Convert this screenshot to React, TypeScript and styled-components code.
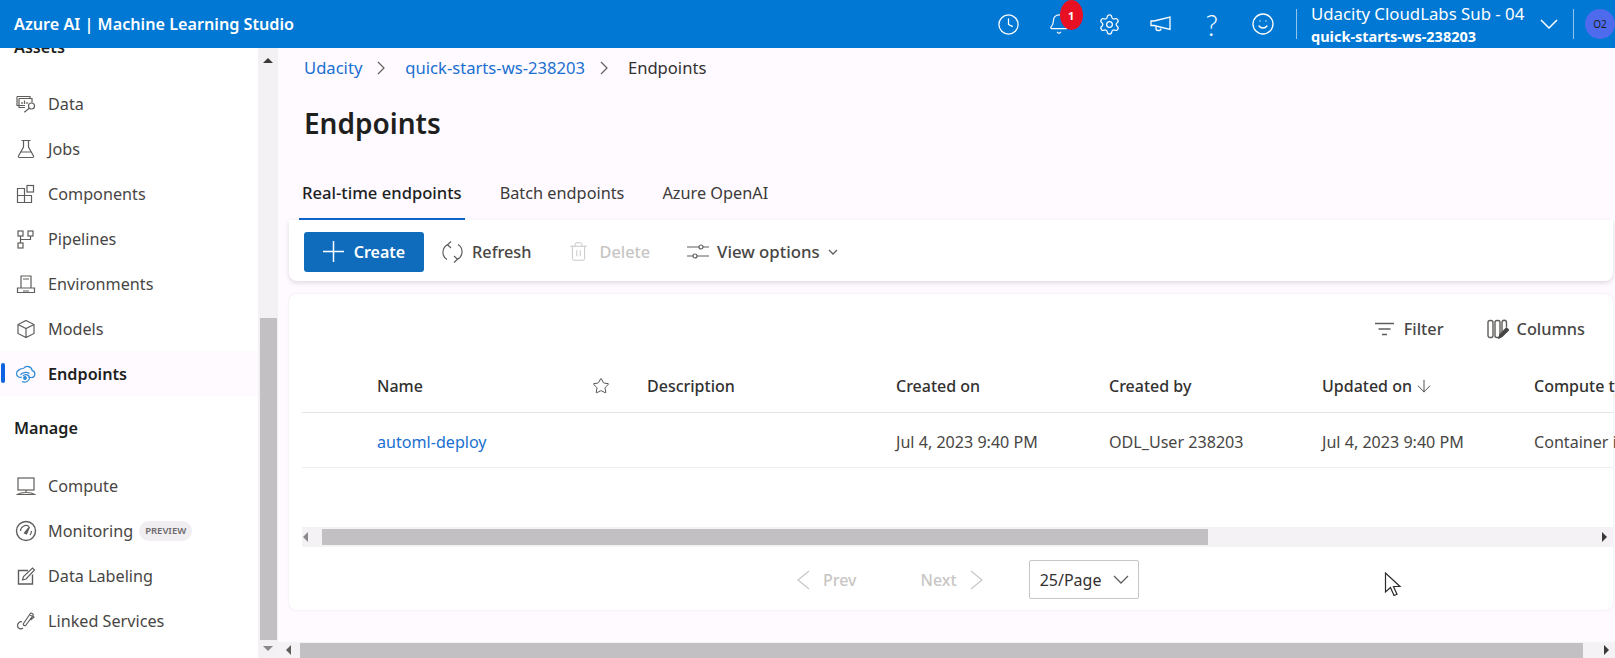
import React from "react";
import styled, { createGlobalStyle } from "styled-components";
import { ArrowDown, Bell, Clock, Settings, Smile, Star, Trash2 } from "lucide-react";

const GlobalStyle = createGlobalStyle`
  html, body {
    margin: 0;
    padding: 0;
    height: 100%;
    overflow: hidden;
    background: #fefaff;
    font-family: "Noto Sans", "Liberation Sans", sans-serif;
    color: #323130;
  }
  * { box-sizing: border-box; }
`;

const Page = styled.div`
  position: relative;
  width: 1615px;
  height: 658px;
  overflow: hidden;
  display: flex;
  flex-direction: column;
`;

/* top bar */
const TopBar = styled.header`
  flex: 0 0 48px;
  display: flex;
  align-items: center;
  justify-content: space-between;
  background: #0078d4;
  color: #fff;
  padding-left: 14px;
`;

const Brand = styled.div`
  font-size: 16.2px;
  font-weight: 600;
`;

const TopRight = styled.div`
  display: flex;
  align-items: center;
  height: 100%;
`;

const TopIcon = styled.div`
  position: relative;
  width: 50.9px;
  display: flex;
  justify-content: center;
  align-items: center;
  font-family: Lato, "Noto Sans", sans-serif;
  font-weight: 300;
  font-size: 29px;
  line-height: 1;
`;

const Badge = styled.span`
  position: absolute;
  top: -13px;
  left: 26px;
  width: 23px;
  height: 30px;
  border-radius: 50%;
  background: #e81123;
  color: #fff;
  font-family: "Noto Sans", sans-serif;
  font-size: 11px;
  font-weight: 700;
  display: flex;
  align-items: center;
  justify-content: center;
`;

const TopDivider = styled.div<{ $right?: number }>`
  width: 1px;
  height: 30px;
  background: #8fc4ec;
  margin: 0 ${(p) => p.$right ?? 14}px 0 8px;
`;

const Workspace = styled.div`
  width: 227px;
  display: flex;
  flex-direction: column;
  gap: 4px;
`;

const WorkspaceName = styled.div`
  font-size: 16.8px;
  line-height: 19px;
  white-space: nowrap;
`;

const WorkspaceId = styled.div`
  font-size: 14.5px;
  font-weight: 700;
  line-height: 18px;
  white-space: nowrap;
`;

const WorkspaceChevron = styled.svg`
  margin-right: 7px;
  margin-left: 2px;
`;

const Avatar = styled.div`
  width: 30px;
  height: 30px;
  border-radius: 50%;
  background: #4f6bed;
  color: #201f1e;
  font-size: 10px;
  display: flex;
  align-items: center;
  justify-content: center;
  margin-left: 11px;
`;

/* body */
const Body = styled.div`
  flex: 1;
  min-height: 0;
  display: flex;
`;

const Sidebar = styled.nav`
  flex: 0 0 258px;
  background: #fff;
  overflow: hidden;
`;

const SectionLabel = styled.div<{ $top: number; $bottom: number }>`
  height: 20px;
  line-height: 20px;
  margin: ${(p) => p.$top}px 0 ${(p) => p.$bottom}px 14px;
  font-size: 16.2px;
  font-weight: 600;
  color: #201f1e;
`;

const NavRow = styled.div<{ $active?: boolean }>`
  position: relative;
  height: 45px;
  display: flex;
  align-items: center;
  gap: 11px;
  padding-left: 15px;
  font-size: 16.2px;
  color: ${(p) => (p.$active ? "#201f1e" : "#484644")};
  font-weight: ${(p) => (p.$active ? 600 : 400)};
  background: ${(p) => (p.$active ? "#fefaff" : "transparent")};

  svg {
    flex: 0 0 22px;
  }

  ${(p) =>
    p.$active
      ? `&::before {
    content: "";
    position: absolute;
    left: 1px;
    top: 12px;
    width: 4px;
    height: 20px;
    border-radius: 2px;
    background: #0f62e0;
  }`
      : ""}
`;

const Preview = styled.span`
  margin-left: -5px;
  padding: 0 6px;
  height: 20px;
  line-height: 20px;
  border-radius: 10px;
  background: #f0eef1;
  color: #6b696b;
  font-size: 9.5px;
  font-weight: 600;
`;

const VScroll = styled.div`
  flex: 0 0 20px;
  background: #f3f1f4;
  display: flex;
  flex-direction: column;
  align-items: center;
`;

const VThumb = styled.div`
  width: 17px;
  height: 322px;
  margin-top: 255px;
  background: #c2c0c3;
`;

const Arrow = styled.span<{ $dir: "up" | "down" | "left" | "right"; $color?: string }>`
  width: 0;
  height: 0;
  flex: none;
  border-style: solid;
  border-color: transparent;
  ${(p) => {
    const c = p.$color ?? "#3b3a39";
    switch (p.$dir) {
      case "up":
        return `border-width: 0 5px 5px 5px; border-bottom-color: ${c};`;
      case "down":
        return `border-width: 5px 5px 0 5px; border-top-color: ${c};`;
      case "left":
        return `border-width: 5px 5px 5px 0; border-right-color: ${c};`;
      default:
        return `border-width: 5px 0 5px 5px; border-left-color: ${c};`;
    }
  }}
`;

const UpArrow = styled(Arrow)`
  margin-top: 10px;
`;

const DownArrow = styled(Arrow)`
  margin-top: 6px;
`;

/* main column */
const Main = styled.main`
  flex: 1;
  min-width: 0;
  display: flex;
  flex-direction: column;
  background: #fefaff;
`;

const Content = styled.div`
  flex: 1;
  min-height: 0;
  padding: 0 2px 0 11px;
`;

const Crumbs = styled.div`
  height: 41px;
  display: flex;
  align-items: center;
  padding: 0 0 2px 15px;
  font-size: 16.6px;
  color: #323130;
`;

const CrumbLink = styled.span`
  color: #1a6fd0;
`;

const CrumbSep = styled.svg`
  margin: 0 20px 0 15px;
`;

const Title = styled.h1`
  margin: 14px 0 0 15px;
  height: 40px;
  line-height: 40px;
  font-size: 28px;
  font-weight: 600;
  color: #201f1e;
`;

const Tabs = styled.div`
  margin: 32px 0 0 10px;
  height: 45px;
  display: flex;
`;

const Tab = styled.div<{ $active?: boolean }>`
  padding: 0 3px;
  margin-right: 32px;
  height: 45px;
  line-height: 36px;
  font-size: ${(p) => (p.$active ? 16.6 : 16.3)}px;
  color: ${(p) => (p.$active ? "#201f1e" : "#3b3a39")};
  font-weight: ${(p) => (p.$active ? 500 : 400)};
  border-bottom: 2px solid ${(p) => (p.$active ? "#0f62c9" : "transparent")};
`;

const Toolbar = styled.div`
  height: 61px;
  background: #fff;
  border-radius: 0 0 8px 8px;
  box-shadow: 0 2px 5px rgba(0, 0, 0, 0.13);
  display: flex;
  align-items: center;
  padding: 2px 0 0 15px;
`;

const CreateButton = styled.div`
  width: 120px;
  height: 40px;
  border-radius: 3px;
  background: #0f6cbd;
  color: #fff;
  font-size: 16px;
  font-weight: 600;
  display: flex;
  align-items: center;
  justify-content: center;
  gap: 10px;
  margin-right: 18px;
`;

const ToolButton = styled.div<{ $disabled?: boolean; $gap?: number; $right?: number; $size?: number }>`
  display: flex;
  align-items: center;
  gap: ${(p) => p.$gap ?? 10}px;
  margin-right: ${(p) => p.$right ?? 0}px;
  font-size: ${(p) => p.$size ?? 16.3}px;
  font-weight: 500;
  color: ${(p) => (p.$disabled ? "#c8c6c4" : "#484644")};
`;

const TableCard = styled.section`
  margin-top: 13px;
  height: 316px;
  background: #fff;
  border-radius: 8px;
  box-shadow: 0 0 3px rgba(0, 0, 0, 0.08);
  display: flex;
  flex-direction: column;
  padding-left: 13px;
`;

const FilterBar = styled.div`
  height: 68px;
  display: flex;
  justify-content: flex-end;
  align-items: center;
  padding: 2px 28px 0 0;
  gap: 43px;
`;

const TableArea = styled.div`
  flex: 0 0 165px;
`;

const Columns = "75px 215px 55px 249px 213px 213px 212px 300px";

const HeadRow = styled.div`
  display: grid;
  grid-template-columns: ${Columns};
  height: 51px;
  padding-bottom: 2px;
  align-items: center;
  border-bottom: 1px solid #e6e4e6;
  font-size: 16px;
  font-weight: 500;
  color: #323130;
  white-space: nowrap;
`;

const DataRow = styled(HeadRow)`
  height: 55px;
  padding: 3px 0 0;
  font-size: 16.1px;
  font-weight: 400;
  color: #484644;
  border-bottom-color: #efedef;
`;

const NameLink = styled.span`
  color: #1a6fd0;
`;

const SortCell = styled.span`
  display: inline-flex;
  align-items: center;
  gap: 2px;
`;

const HScroll = styled.div<{ $pad: number; $left: number; $width: number; $height: number; $thumb: number }>`
  flex: 0 0 ${(p) => p.$height}px;
  display: flex;
  align-items: center;
  background: #f5f2f6;
  padding: 0 6px 0 ${(p) => p.$pad}px;

  & > i {
    display: block;
    height: ${(p) => p.$thumb}px;
    width: ${(p) => p.$width}px;
    margin-left: ${(p) => p.$left}px;
    background: #c2c0c3;
  }

  & > span:last-child {
    margin-left: auto;
  }
`;

const Pager = styled.div`
  flex: 1;
  display: flex;
  align-items: center;
  padding: 2px 0 0 494px;
  font-size: 16px;
  font-weight: 500;
  color: #c8c6c4;
`;

const PagerLink = styled.div<{ $right: number }>`
  display: flex;
  align-items: center;
  gap: 13px;
  margin-right: ${(p) => p.$right}px;
`;

const PageSelect = styled.div`
  width: 110px;
  height: 39px;
  border: 1px solid #c8c6c4;
  border-radius: 2px;
  display: flex;
  align-items: center;
  justify-content: space-between;
  padding: 0 9px 0 10px;
  color: #323130;
  font-weight: 400;
  font-size: 16px;
`;

const Cursor = styled.svg`
  position: absolute;
  left: 1384px;
  top: 572px;
`;

/* drawn icons that the packages don't have */
const Draw = ({ children, color = "#605e5c" }: { children: React.ReactNode; color?: string }) => (
  <svg width="22" height="22" viewBox="0 0 22 22" fill="none" stroke={color} strokeWidth="1.2">
    {children}
  </svg>
);

const DataIcon = () => (
  <Draw>
    <path d="M2 3.5h13v2M2 3.5v9h8M4 5.5h13v4M4 5.5v9h6" />
    <path d="M7 11V9M9.5 11V7.5M12 11V9" />
    <circle cx="16.5" cy="13" r="3" />
    <path d="M14.3 15.2l-5 4" />
  </Draw>
);

const JobsIcon = () => (
  <Draw>
    <path d="M6.5 2.5h9M8.5 2.5v6.5L3.5 18a1 1 0 0 0 .9 1.5h13.2a1 1 0 0 0 .9-1.5l-5-9V2.5M6 14h10" />
  </Draw>
);

const ComponentsIcon = () => (
  <Draw>
    <path d="M2.5 5.5h7v7h-7zM2.5 12.5h7v7h-7zM9.5 12.5h7v7h-7z" />
    <rect x="12" y="2.5" width="6.5" height="6.5" />
  </Draw>
);

const PipelinesIcon = () => (
  <Draw>
    <rect x="3" y="3" width="5" height="5" />
    <rect x="13" y="3" width="5" height="5" />
    <rect x="3" y="15" width="5" height="5" />
    <path d="M5.5 8v7M5.5 11.5h10V8" />
  </Draw>
);

const EnvironmentsIcon = () => (
  <Draw>
    <path d="M6 15V3h10v12M2.5 19.5h17v-4.5h-17zM8 6h6M8 18h6" />
  </Draw>
);

const ModelsIcon = () => (
  <Draw>
    <path d="M11 2.5l8 4v9l-8 4-8-4v-9zM3 6.5l8 4 8-4M11 10.5v9" />
  </Draw>
);

const EndpointsIcon = () => (
  <Draw color="#2f8ad6">
    <path d="M13.500 14.500h3a3.500 3.500 0 0 0 .7-6.900A4.800 4.800 0 0 0 8.500 5.500" />
    <path d="M8.500 5.500C5.500 5.500 1.500 7.500 1.500 10.500s3 4.500 5.500 3.500" />
    <path d="M14.500 10.500C11.500 8.500 6.500 9.500 5.500 12M7 18.500c3.500 1.500 7.500-.5 7.500-3.500s-4.500-4.500-6.500-2" />
    <circle cx="10" cy="15" r="1.300" fill="#2f8ad6" />
  </Draw>
);

const ComputeIcon = () => (
  <Draw>
    <rect x="3" y="3" width="16" height="12" />
    <path d="M11 15v2.500M2.500 19.500c2-1.500 5-2 8.500-2s6.500.5 8.500 2z" />
  </Draw>
);

const MonitoringIcon = () => (
  <Draw>
    <circle cx="11" cy="11" r="9.500" strokeWidth="1.400" />
    <path d="M5.500 11A5.500 5.500 0 0 1 14 6.400M16.500 11c0 1.500-.6 3-1.500 4" />
    <path d="M9.500 13l5-6-3 7z" fill="#605e5c" />
  </Draw>
);

const LabelingIcon = () => (
  <Draw>
    <path d="M17.500 9.500v9.500h-14V5.500h9.500" strokeWidth="1.400" />
    <path d="M7.500 15l1-3.500L17.500 3l2 2-8.500 9z" />
  </Draw>
);

const LinkedIcon = () => (
  <Draw>
    <path d="M8.500 13.500l6.500-9.500c1-1.500 4-.5 3 1.500l-7 9.500c-1 1.500-3.500 0-2.500-1.500zM7 12c-2-1-4.500 1-4.500 3.500 0 3 3.500 4.500 5.500 2.500M15 5.500c1 0 3.500.5 4 1.500l-3.500 3" />
  </Draw>
);

const MegaphoneIcon = () => (
  <svg width="21" height="16" viewBox="0 0 21 16" fill="none" stroke="#fff" strokeWidth="1.300">
    <path d="M1 5h3L20 1v12.500L4 9.500H1zM6 10v2.500a2 2 0 0 0 2 2h1a2 2 0 0 0 2-2" />
  </svg>
);

const RefreshIcon = () => (
  <svg width="21" height="24" viewBox="0 0 21 24" fill="none" stroke="#605e5c" strokeWidth="1.200">
    <path d="M6 4.500a8.500 8.500 0 0 0-1 15M15 19.500a8.500 8.500 0 0 0 1-15" />
    <path d="M9 1.500L5.500 4.800 9 8M12 22.500l3.500-3.300L12 16" />
  </svg>
);

const FilterIcon = () => (
  <svg width="19" height="14" viewBox="0 0 19 14" fill="none" stroke="#605e5c" strokeWidth="1.300">
    <path d="M0 1.500h19M3.500 7h12M7 12.500h5" />
  </svg>
);

const ColumnsIcon = () => (
  <svg width="22" height="22" viewBox="0 0 22 22" fill="none" stroke="#605e5c" strokeWidth="1.400">
    <rect x="1" y="2.500" width="5" height="17" rx="2" />
    <rect x="8" y="2.500" width="5" height="17" rx="2" />
    <path d="M15 14V4.500a2 2 0 0 1 4.500 0V9" />
    <path d="M12 20l1-3.500 6.500-6.500 2 2-6.500 6.500z" fill="#484644" stroke="#484644" />
  </svg>
);

const SlidersIcon = () => (
  <svg width="22" height="19" viewBox="0 0 22 19" fill="none" stroke="#605e5c" strokeWidth="1.200">
    <path d="M0 5h12M16 5h6M0 14h6M10 14h12" />
    <circle cx="14" cy="5" r="2" />
    <circle cx="8" cy="14" r="2" />
  </svg>
);

const PlusIcon = () => (
  <svg width="21" height="21" viewBox="0 0 21 21" stroke="#fff" strokeWidth="1.500">
    <path d="M10.500 0v21M0 10.500h21" />
  </svg>
);

const ChevronDownIcon = ({ w, h, color }: { w: number; h: number; color: string }) => (
  <svg width={w} height={h} viewBox={`0 0 ${w} ${h}`} fill="none" stroke={color} strokeWidth="1.300">
    <path d={`M1 1L${w / 2} ${h - 1}L${w - 1} 1`} />
  </svg>
);

const PagerChevron = ({ left }: { left?: boolean }) => (
  <svg width="14" height="20" viewBox="0 0 14 20" fill="none" stroke="#c8c6c4" strokeWidth="1.200">
    <path d={left ? "M13 1L2 10l11 9" : "M1 1l11 9-11 9"} />
  </svg>
);

const navAssets = [
  { label: "Data", icon: <DataIcon /> },
  { label: "Jobs", icon: <JobsIcon /> },
  { label: "Components", icon: <ComponentsIcon /> },
  { label: "Pipelines", icon: <PipelinesIcon /> },
  { label: "Environments", icon: <EnvironmentsIcon /> },
  { label: "Models", icon: <ModelsIcon /> },
  { label: "Endpoints", icon: <EndpointsIcon />, active: true },
];

const navManage = [
  { label: "Compute", icon: <ComputeIcon /> },
  { label: "Monitoring", icon: <MonitoringIcon />, preview: true },
  { label: "Data Labeling", icon: <LabelingIcon /> },
  { label: "Linked Services", icon: <LinkedIcon /> },
];

type NavItem = { label: string; icon: React.ReactNode; active?: boolean; preview?: boolean };

const renderNav = (items: NavItem[]) =>
  items.map((item) => (
    <NavRow key={item.label} $active={item.active}>
      {item.icon}
      {item.label}
      {item.preview && <Preview>PREVIEW</Preview>}
    </NavRow>
  ));

const Separator = () => (
  <CrumbSep width="8" height="14" viewBox="0 0 8 14" fill="none" stroke="#605e5c" strokeWidth="1.200">
    <path d="M1 1l6 6-6 6" />
  </CrumbSep>
);

export default function App() {
  return (
    <Page>
      <GlobalStyle />
      <TopBar>
        <Brand>Azure AI | Machine Learning Studio</Brand>
        <TopRight>
          <TopIcon>
            <Clock size={23} strokeWidth={1.3} />
          </TopIcon>
          <TopIcon>
            <Bell size={22} strokeWidth={1.3} />
            <Badge>1</Badge>
          </TopIcon>
          <TopIcon>
            <Settings size={23} strokeWidth={1.3} />
          </TopIcon>
          <TopIcon>
            <MegaphoneIcon />
          </TopIcon>
          <TopIcon>?</TopIcon>
          <TopIcon>
            <Smile size={24} strokeWidth={1.3} />
          </TopIcon>
          <TopDivider />
          <Workspace>
            <WorkspaceName>Udacity CloudLabs Sub - 04</WorkspaceName>
            <WorkspaceId>quick-starts-ws-238203</WorkspaceId>
          </Workspace>
          <WorkspaceChevron width="18" height="10" viewBox="0 0 18 10" fill="none" stroke="#fff" strokeWidth="1.500">
            <path d="M1 1l8 8 8-8" />
          </WorkspaceChevron>
          <TopDivider $right={0} />
          <Avatar>O2</Avatar>
        </TopRight>
      </TopBar>

      <Body>
        <Sidebar>
          <SectionLabel $top={-11} $bottom={24}>Assets</SectionLabel>
          {renderNav(navAssets)}
          <SectionLabel $top={22} $bottom={25}>Manage</SectionLabel>
          {renderNav(navManage)}
        </Sidebar>
        <VScroll>
          <UpArrow $dir="up" />
          <VThumb />
          <DownArrow $dir="down" $color="#8a888a" />
        </VScroll>

        <Main>
          <Content>
            <Crumbs>
              <CrumbLink>Udacity</CrumbLink>
              <Separator />
              <CrumbLink>quick-starts-ws-238203</CrumbLink>
              <Separator />
              Endpoints
            </Crumbs>
            <Title>Endpoints</Title>
            <Tabs>
              <Tab $active>Real-time endpoints</Tab>
              <Tab>Batch endpoints</Tab>
              <Tab>Azure OpenAI</Tab>
            </Tabs>
            <Toolbar>
              <CreateButton>
                <PlusIcon />
                Create
              </CreateButton>
              <ToolButton $gap={9} $right={37}>
                <RefreshIcon />
                Refresh
              </ToolButton>
              <ToolButton $disabled $right={37}>
                <Trash2 size={21} strokeWidth={1.1} />
                Delete
              </ToolButton>
              <ToolButton $size={16.8} $gap={8}>
                <SlidersIcon />
                View options
                <ChevronDownIcon w={10} h={6} color="#605e5c" />
              </ToolButton>
            </Toolbar>

            <TableCard>
              <FilterBar>
                <ToolButton>
                  <FilterIcon />
                  Filter
                </ToolButton>
                <ToolButton $gap={8}>
                  <ColumnsIcon />
                  Columns
                </ToolButton>
              </FilterBar>
              <TableArea>
                <HeadRow>
                  <span />
                  <span>Name</span>
                  <Star size={18} strokeWidth={1.1} />
                  <span>Description</span>
                  <span>Created on</span>
                  <span>Created by</span>
                  <SortCell>
                    Updated on <ArrowDown size={20} strokeWidth={1} />
                  </SortCell>
                  <span>Compute type</span>
                </HeadRow>
                <DataRow>
                  <span />
                  <NameLink>automl-deploy</NameLink>
                  <span />
                  <span />
                  <span>Jul 4, 2023 9:40 PM</span>
                  <span>ODL_User 238203</span>
                  <span>Jul 4, 2023 9:40 PM</span>
                  <span>Container instance</span>
                </DataRow>
              </TableArea>
              <HScroll $pad={1} $left={14} $width={886} $height={20} $thumb={16}>
                <Arrow $dir="left" $color="#8a888a" />
                <i />
                <Arrow $dir="right" />
              </HScroll>
              <Pager>
                <PagerLink $right={64}>
                  <PagerChevron left />
                  Prev
                </PagerLink>
                <PagerLink $right={45}>
                  Next
                  <PagerChevron />
                </PagerLink>
                <PageSelect>
                  25/Page
                  <ChevronDownIcon w={16} h={9} color="#605e5c" />
                </PageSelect>
              </Pager>
            </TableCard>
          </Content>
          <HScroll $pad={8} $left={9} $width={1283} $height={16} $thumb={15}>
            <Arrow $dir="left" $color="#605e5c" />
            <i />
            <Arrow $dir="right" />
          </HScroll>
        </Main>
      </Body>

      <Cursor width="18" height="26" viewBox="0 0 18 26">
        <path d="M1.500 1v19l5-4.500 3.500 8 3-1.300-3.500-7.700h6.500z" fill="#fff" stroke="#2b2b2b" strokeWidth="1.200" />
      </Cursor>
    </Page>
  );
}
